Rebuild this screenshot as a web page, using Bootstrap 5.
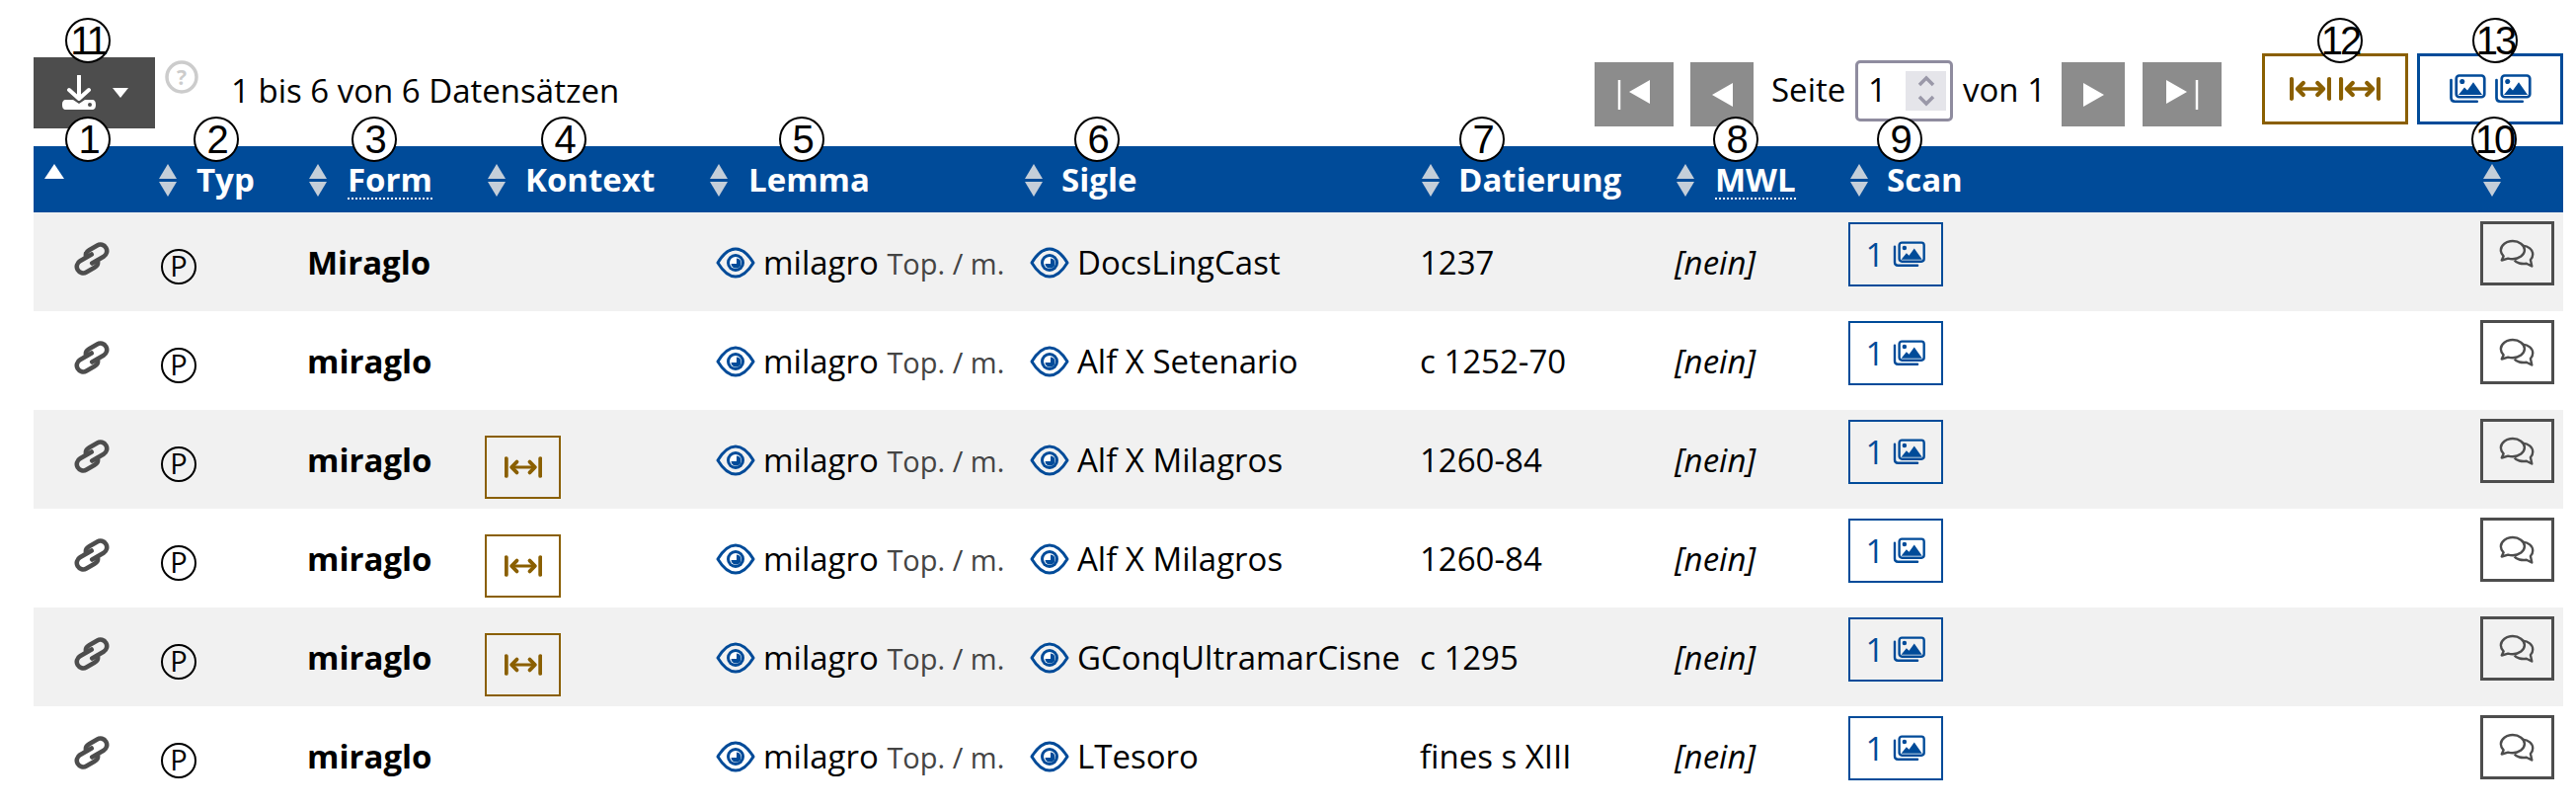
<!doctype html>
<html lang="de"><head><meta charset="utf-8"><title>Treffer</title>
<link href="https://cdn.jsdelivr.net/npm/bootstrap@5.3.0/dist/css/bootstrap.min.css" rel="stylesheet">
<style>
html,body{height:818px;overflow:hidden}
body{background:#fff;color:#000;font-family:"Open Sans",sans-serif;font-size:33px}
.page{position:relative;padding:0 13px 0 34px}
.tools{height:148px;padding-top:54px}
.dl-btn{width:123px;height:72px;margin-top:4px;background:#4d4d4d;border:0;border-radius:0;color:#fff;padding:0}
.help{margin:7px 0 0 10px}
.count{margin:16px 0 0 33px;line-height:44px}
.pbtn{height:65px;margin-top:9px;background:#8c8c8c;border:0;border-radius:0;padding:0;display:flex;align-items:center;justify-content:center}
.p-wide{width:80px}.p-small{width:64px}
.gap-a{margin-right:17px}.gap-b{margin-right:18px}
.lbl{margin-top:15px;line-height:44px;white-space:nowrap}
.lbl-a{width:85px}.lbl-b{width:100px;margin-left:10px}
.pinput{width:99px;height:62px;margin-top:7px;border:3px solid #8f8c9f;border-radius:5px;background:#fff;font-size:33px;line-height:54px;padding-left:10px}
.spin{width:41px;height:40px;background:#e5e5ea;margin:8px 4px 0 0}
.vbtn{width:148px;height:72px;background:#fff;border-radius:0;padding:0;margin-left:9px}
.vbrown{border:3px solid #8a5f00;margin-left:41px}
.vblue{border:3px solid #004b99}
.hits{width:2562px;table-layout:fixed;margin:0;--bs-table-striped-bg:#f1f1f1;--bs-table-bg:transparent;--bs-table-striped-color:#000;--bs-table-color:#000;border-collapse:collapse}
.hits thead th{background:#004b99;color:#fff;height:67px;padding:0 0 0 10px;border:0;font-size:33px;font-weight:700;line-height:44px;vertical-align:middle;white-space:nowrap;box-shadow:none}
.hits tbody td{height:100px;padding:9px 0 0 10px;border:0;vertical-align:top;white-space:nowrap;line-height:44px}
.w1{width:119px}.w2{width:148px}.w3{width:180px}.w4{width:234px}.w5{width:318px}.w6{width:395px}.w7{width:258px}.w8{width:176px}.w9{width:640px}.w10{width:94px}
.sort{display:inline-block;vertical-align:middle;margin:-4px 19px 0 -2px;width:19px;height:33px;position:relative}
.sort::before,.sort::after{content:"";position:absolute;left:0;border-left:9.5px solid transparent;border-right:9.5px solid transparent}
.sort::before{top:0;border-bottom:15px solid #c4ced9}
.sort::after{bottom:0;border-top:15px solid #c4ced9}
.hits th:nth-child(3) .sort{margin-left:2px;margin-right:20px}
.hits th:nth-child(7) .sort,.hits th:nth-child(9) .sort{margin-left:2px;margin-right:18px}
.hits th:nth-child(8) .sort{margin-left:2px;margin-right:20px}
.hits th:nth-child(4) .sort{margin-left:3px;margin-right:19px}
.hits th:nth-child(10) .sort{margin-left:3px;margin-right:14px}
.hits th:nth-child(5) .sort{margin-left:-6px;margin-right:20px}
.hits th:nth-child(6) .sort{margin-left:-5px;margin-right:18px}
.sort-up{display:block;margin:-16px 0 0 1px;width:0;border-left:10px solid transparent;border-right:10px solid transparent;border-bottom:15px solid #fff}
.abbr-d{border-bottom:2px dotted #fff;display:inline-block;line-height:37px}
.lk{display:block;margin:21px 0 0 27px}
.typ{display:inline-block;width:36px;height:36px;border:2.5px solid #000;border-radius:50%;font-size:29px;line-height:29px;text-align:center;margin-top:28px;font-weight:400}
.form-t{display:inline-block;font-weight:700;margin-top:20px}
.cx{display:flex;align-items:center;justify-content:center;width:77px;height:64px;border:2px solid #8a5f00;margin-top:17px;background:transparent;padding:0;border-radius:0}
.eye{vertical-align:-4px;margin-right:8px}
.cell-t{display:inline-block;margin-top:20px}
.pos{font-size:29px;color:#444;margin-left:0}
.nein{font-style:italic}
.scan{display:flex;align-items:center;justify-content:center;gap:9px;width:96px;height:65px;border:2.5px solid #004b99;color:#004b99;margin-top:1px;background:transparent;padding:0;border-radius:0;font-size:33px}
.cmt{display:flex;align-items:center;justify-content:center;width:75px;height:65px;border:3px solid #4d4d4d;background:transparent;padding:0;border-radius:0}
.num{position:absolute;width:46px;height:46px;margin:-23px 0 0 -23px;background:#fff;border:2px solid #000;border-radius:50%;font-family:"Liberation Sans",sans-serif;font-size:40px;line-height:42px;text-align:center;letter-spacing:-3px;z-index:5}
.n1,.n2,.n3,.n4,.n5,.n6,.n7,.n8,.n9,.n10{top:141px}
.n11,.n12,.n13{top:41px}
.n1{left:89px}.n2{left:219px}.n3{left:379px}.n4{left:571px}.n5{left:812px}.n6{left:1111px}.n7{left:1501px}.n8{left:1758px}.n9{left:1924px}.n10{left:2526px}.n11{left:89px}.n12{left:2370px}.n13{left:2527px}
</style></head><body>
<svg width="0" height="0" class="position-absolute"><defs>
<symbol id="eye" viewBox="0 0 40 32"><path d="M2 16C8 6 14 2 20 2s12 4 18 14c-6 10-12 14-18 14S8 26 2 16Z" fill="none" stroke="currentColor" stroke-width="3" stroke-linejoin="round"/><circle cx="20" cy="16" r="9" fill="currentColor"/><circle cx="20" cy="16" r="6" fill="#fff"/><path d="M21 11.500a5 5 0 1 1-5.500 5.500h5.500Z" fill="currentColor"/></symbol>
<symbol id="link" viewBox="0 0 44 34"><g transform="rotate(-30 22 17)" fill="none" stroke="#4d4d4d" stroke-width="4.600" stroke-linecap="round" stroke-linejoin="round"><path d="M24 13H10.500a6.500 6.500 0 0 0 0 13H20c3.500 0 5.500-2 6-4.500"/><path d="M20 21H33.500a6.500 6.500 0 0 0 0-13H24c-3.500 0-5.500 2-6 4.500"/></g></symbol>
<symbol id="imgs" viewBox="0 0 50 40"><g fill="none" stroke="currentColor" stroke-width="3.600" stroke-linecap="round"><rect x="10" y="2" width="38" height="29" rx="4"/><path d="M3 8v24c0 3 2 5 5 5h30"/></g><circle cx="18" cy="10" r="3.400" fill="currentColor"/><path d="M13 28l8-10 4 4 8-11 12 17Z" fill="currentColor"/></symbol>
<symbol id="ctx" viewBox="0 0 64 36"><g fill="none" stroke="currentColor" stroke-linecap="round" stroke-linejoin="round"><path d="M3 3v30M61 3v30" stroke-width="6.500"/><path d="M14 18h36" stroke-width="5"/><path d="M21 9l-9 9 9 9M43 9l9 9-9 9" stroke-width="6.500"/></g></symbol>
<symbol id="cmt" viewBox="0 0 40 32"><g fill="none" stroke="#4d4d4d" stroke-width="2.600" stroke-linejoin="round"><path d="M15 2C8 2 2 6.500 2 12c0 2.500 1 4.500 3 6.500L3 23l7-2c1.500.4 3 .6 5 .6 7 0 13-4.400 13-9.800S22 2 15 2Z"/><path d="M26 7c6 .5 11 4 11 9.500 0 2.500-1 4.500-2.500 6l1.500 7-6-3c-5 1-11-.5-13-3.500"/></g></symbol>
</defs></svg>
<div class="page">
<div class="num n11">11</div><div class="num n12">12</div><div class="num n13">13</div>
<div class="num n1">1</div><div class="num n2">2</div><div class="num n3">3</div><div class="num n4">4</div><div class="num n5">5</div><div class="num n6">6</div><div class="num n7">7</div><div class="num n8">8</div><div class="num n9">9</div><div class="num n10">10</div>

<div class="tools d-flex align-items-start">
 <button class="dl-btn btn d-flex align-items-center justify-content-center gap-3" type="button" aria-label="Export">
  <svg width="36" height="36" viewBox="0 0 36 36"><path d="M18 1v23M8 15l10 9 10-9" fill="none" stroke="#fff" stroke-width="4" stroke-linecap="round" stroke-linejoin="round"/><path d="M5 25h7l6 4 6-4h7c3 0 4 2 4 5s-1 5-4 5H5c-3 0-4-2-4-5s1-5 4-5Z" fill="#fff"/><circle cx="29" cy="30" r="2" fill="#4d4d4d"/></svg>
  <svg width="16" height="12" viewBox="0 0 16 12"><path d="M0 1h16L8 11Z" fill="#fff"/></svg>
 </button>
 <svg class="help" width="34" height="34" viewBox="0 0 34 34"><ellipse cx="17" cy="17" rx="15" ry="15" fill="none" stroke="#ccc" stroke-width="3.500"/><text x="17" y="24.500" text-anchor="middle" font-family="Open Sans" font-weight="700" font-size="21" fill="#ccc">?</text></svg>
 <div class="count">1 bis 6 von 6 Datensätzen</div>
 <div class="ms-auto d-flex align-items-start">
  <button class="pbtn p-wide btn gap-a" type="button" aria-label="Erste"><svg width="34" height="32" viewBox="0 0 34 32"><path d="M2 1v30" stroke="#fff" stroke-width="2.500"/><path d="M33 1v24L12 13Z" fill="#fff"/></svg></button>
  <button class="pbtn p-small btn gap-b" type="button" aria-label="Zurück"><svg width="21" height="24" viewBox="0 0 21 24"><path d="M21 0v24L0 12Z" fill="#fff"/></svg></button>
  <div class="lbl lbl-a">Seite</div>
  <div class="pinput d-flex justify-content-between"><span>1</span><span class="spin d-flex align-items-center justify-content-center"><svg width="20" height="32" viewBox="0 0 20 32"><path d="M3 10l7-7 7 7M3 22l7 7 7-7" fill="none" stroke="#9a98a8" stroke-width="3.500"/></svg></span></div>
  <div class="lbl lbl-b">von 1</div>
  <button class="pbtn p-small btn gap-b" type="button" aria-label="Weiter"><svg width="21" height="24" viewBox="0 0 21 24"><path d="M0 0v24L21 12Z" fill="#fff"/></svg></button>
  <button class="pbtn p-wide btn" type="button" aria-label="Letzte"><svg width="34" height="32" viewBox="0 0 34 32"><path d="M32 1v30" stroke="#fff" stroke-width="2.500"/><path d="M1 1v24L22 13Z" fill="#fff"/></svg></button>
  <button class="vbtn vbrown btn d-flex align-items-center justify-content-center gap-2 text-center" type="button" aria-label="Kontext"><svg width="42" height="24" color="#8a5f00"><use href="#ctx"/></svg><svg width="42" height="24" color="#8a5f00"><use href="#ctx"/></svg></button>
  <button class="vbtn vblue btn d-flex align-items-center justify-content-center gap-2" type="button" aria-label="Scans"><svg width="38" height="30" color="#004b99"><use href="#imgs"/></svg><svg width="38" height="30" color="#004b99"><use href="#imgs"/></svg></button>
 </div>
</div>

<table class="hits table table-striped">
<colgroup><col class="w1"><col class="w2"><col class="w3"><col class="w4"><col class="w5"><col class="w6"><col class="w7"><col class="w8"><col class="w9"><col class="w10"></colgroup>
<thead><tr>
<th><span class="sort-up"></span></th>
<th><span class="sort"></span>Typ</th>
<th><span class="sort"></span><span class="abbr-d">Form</span></th>
<th><span class="sort"></span>Kontext</th>
<th><span class="sort"></span>Lemma</th>
<th><span class="sort"></span>Sigle</th>
<th><span class="sort"></span>Datierung</th>
<th><span class="sort"></span><span class="abbr-d">MWL</span></th>
<th><span class="sort"></span>Scan</th>
<th><span class="sort"></span></th>
</tr></thead>
<tbody id="rows"></tbody>
</table>
</div>
<script>
const data=[["Miraglo",0,"DocsLingCast","1237"],["miraglo",0,"Alf X Setenario","c 1252-70"],["miraglo",1,"Alf X Milagros","1260-84"],["miraglo",1,"Alf X Milagros","1260-84"],["miraglo",1,"GConqUltramarCisne","c 1295"],["miraglo",0,"LTesoro","fines s XIII"]];
const eye='<svg class="eye" width="40" height="32" color="#004b99"><use href="#eye"/></svg>';
document.getElementById('rows').innerHTML=data.map(d=>`<tr>
<td><svg class="lk" width="44" height="34"><use href="#link"/></svg></td>
<td><span class="typ">P</span></td>
<td><span class="form-t">${d[0]}</span></td>
<td>${d[1]?'<button class="cx btn" type="button" aria-label="Kontext"><svg width="38" height="22" color="#8a5f00"><use href="#ctx"/></svg></button>':''}</td>
<td><span class="cell-t">${eye}milagro <span class="pos">Top. / m.</span></span></td>
<td><span class="cell-t">${eye}${d[2]}</span></td>
<td><span class="cell-t">${d[3]}</span></td>
<td><span class="cell-t nein">[nein]</span></td>
<td><button class="scan btn" type="button"><span>1</span><svg width="33" height="27" color="#004b99"><use href="#imgs"/></svg></button></td>
<td><button class="cmt btn" type="button" aria-label="Kommentar"><svg width="37" height="30"><use href="#cmt"/></svg></button></td>
</tr>`).join('');
</script>
<script src="https://cdn.jsdelivr.net/npm/bootstrap@5.3.0/dist/js/bootstrap.bundle.min.js"></script>
</body></html>
